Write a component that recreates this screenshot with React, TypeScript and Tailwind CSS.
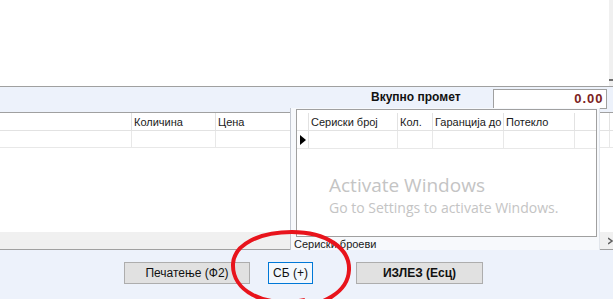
import React from "react";

const mainCols = [
  { label: "", w: 132 },
  { label: "Количина", w: 84 },
  { label: "Цена", w: 394 },
];

const serialCols = [
  { label: "Сериски број", w: 89 },
  { label: "Кол.", w: 35 },
  { label: "Гаранција до", w: 71 },
  { label: "Потекло", w: 71 },
];

const SerialPanel = () => (
  <div className="absolute left-[290px] top-[108px] w-[310px] h-[142px] bg-[#f7f9fc] border-l border-[#c4c9d2] border-r border-r-[#e2e6ec]">
    <div className="ml-[5px] mt-[1px] w-[301px] h-[128px] bg-white border border-[#a0a0a0] pt-[3px]">
      <div className="flex h-[18px] border-b border-[#e2e2e2]">
        <div className="w-[12px] border-r border-[#e2e2e2]" />
        {serialCols.map((c) => (
          <div
            key={c.label}
            style={{ width: c.w }}
            className="border-r border-[#e2e2e2] pl-[2px] leading-[18px] text-[#1a1a1a]"
          >
            {c.label}
          </div>
        ))}
      </div>
      <div className="flex h-[18px] border-b border-[#e8e8e8]">
        <div className="w-[12px] border-r border-[#e2e2e2] flex items-center justify-center">
          <svg width="7" height="10" viewBox="0 0 7 10">
            <path d="M1 0 L7 5 L1 10 Z" fill="#000" />
          </svg>
        </div>
        {serialCols.map((c) => (
          <div key={c.label} style={{ width: c.w }} className="border-r border-[#e8e8e8]" />
        ))}
      </div>
    </div>
    <div className="pl-[3px] pt-[1px] leading-[12px] text-[#1a1a1a]">Сериски броеви</div>
  </div>
);

const App = () => {
  return (
    <div
      className="relative w-[613px] h-[299px] overflow-hidden bg-[#edf2fb] text-[11px]"
      style={{ fontFamily: '"Liberation Sans", "DejaVu Sans", sans-serif' }}
    >
      {/* top area */}
      <div className="h-[87px] bg-white flex justify-end border-b border-[#a0a0a0]">
        <div className="w-[4px] bg-[#f0f0f0] relative">
          <div className="absolute top-[77px] left-0 w-[4px] h-[4px] border-b-2 border-[#707070]" />
        </div>
      </div>

      {/* total bar */}
      <div className="h-[25px] flex items-center">
        <div className="ml-[371px] font-bold text-[12px] text-[#111] -mt-[6px]">Вкупно промет</div>
        <div className="ml-[32px] w-[114px] h-[20px] bg-white border border-[#a0a0a0] flex items-center justify-end pr-[2px] -mt-[2px] text-[13px] font-bold tracking-[1px] text-[#7b2222]">
          0.00
        </div>
      </div>

      {/* main grid */}
      <div className="h-[138px] bg-white border-t border-[#a0a0a0] border-b border-b-[#a0a0a0] flex flex-col">
        <div className="flex h-[18px] border-b border-[#e2e2e2]">
          {mainCols.map((c, i) => (
            <div
              key={i}
              style={{ width: c.w }}
              className="border-r border-[#e2e2e2] pl-[2px] leading-[18px] text-[#1a1a1a]"
            >
              {c.label}
            </div>
          ))}
        </div>
        <div className="flex h-[17px] border-b border-[#e8e8e8]">
          {mainCols.map((c, i) => (
            <div key={i} style={{ width: c.w }} className="border-r border-[#e8e8e8]" />
          ))}
        </div>
        <div className="flex-1" />
        <div className="h-[17px] bg-[#f0f0f0] flex justify-end items-center">
          <svg width="5" height="8" viewBox="0 0 5 8">
            <path d="M0 1 L4 4 L0 7" fill="none" stroke="#606060" strokeWidth="1.5" />
          </svg>
        </div>
      </div>

      {/* buttons */}
      <div className="flex pt-[12px] pl-[124px]">
        <button className="w-[126px] h-[22px] bg-[#e1e1e1] border border-[#adadad] text-[#111] text-[12px]">
          Печатење (Ф2)
        </button>
        <button className="ml-[18px] w-[45px] h-[22px] bg-[#f3f8fd] border border-[#0078d7] text-[#111] text-[12px]">
          СБ (+)
        </button>
        <button className="ml-[43px] w-[127px] h-[22px] bg-[#e1e1e1] border border-[#adadad] text-[#111] text-[12px] font-bold">
          ИЗЛЕЗ (Есц)
        </button>
      </div>

      <SerialPanel />

      {/* watermark */}
      <div
        className="absolute left-[329px] top-[174px] text-[#c4c4c4] pointer-events-none"
        style={{ fontFamily: '"Open Sans", "Noto Sans", sans-serif' }}
      >
        <div className="text-[19px] leading-[23px]">Activate Windows</div>
        <div className="text-[14px] leading-[21px]">Go to Settings to activate Windows.</div>
      </div>

      {/* red annotation */}
      <svg className="absolute left-0 top-0 pointer-events-none" width="613" height="299">
        <path
          d="M305 300 C 262 308 232 290 233 264 C 234 244 260 232 292 232 C 326 232 350 248 349 270 C 348 292 324 306 290 308"
          fill="none"
          stroke="#e8141c"
          strokeWidth="4"
        />
      </svg>
    </div>
  );
};

export default App;
